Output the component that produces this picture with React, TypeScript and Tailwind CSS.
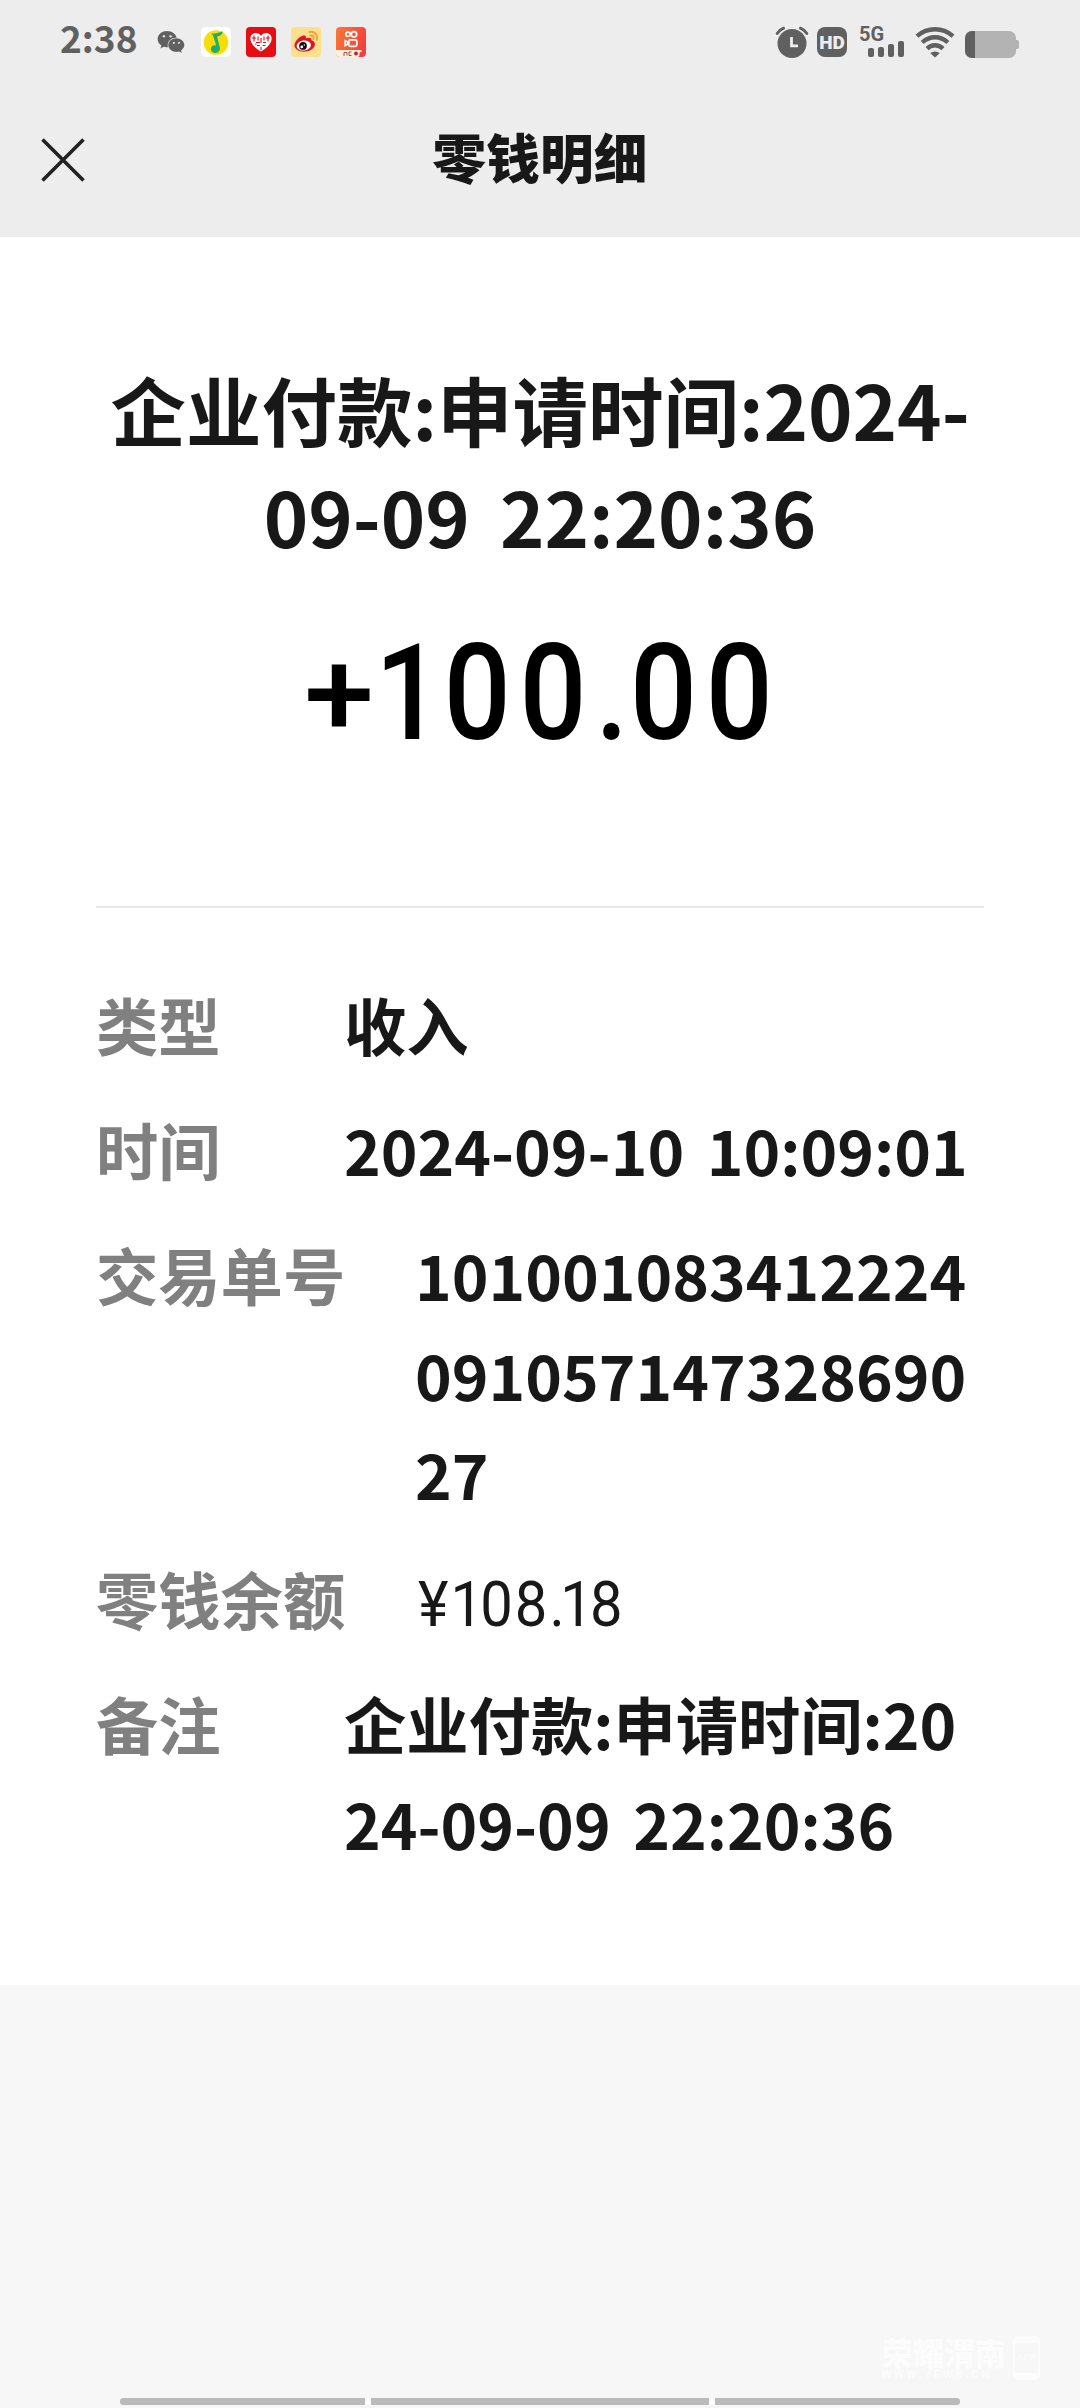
import type { ReactNode } from "react";
import { FaWeixin } from "react-icons/fa";

const cjk = "font-['Noto_Sans_CJK_SC',sans-serif]";

function MusicIcon() {
  return (
    <svg viewBox="0 0 30 30" className="size-[30px]">
      <rect width="30" height="30" rx="5" fill="#fff" />
      <circle cx="15" cy="15.5" r="12.3" fill="#fbdc05" />
      <path d="M10.5 6.5C14.5 6.6 18 5.8 21.5 4.2C22 6.8 19.8 8.7 16 9.4L18.9 20.6C19.4 23.7 17.4 26 14.5 26C11.7 26 9.8 24.3 9.8 22C9.8 19 12.6 17.6 15.2 18.4L12 8.4Z" fill="#1fae6d" />
    </svg>
  );
}

function HeartIcon() {
  return (
    <svg viewBox="0 0 30 30" className="size-[30px]">
      <rect width="30" height="30" rx="4" fill="#e60d14" />
      <path d="M15 24.5C10 21.5 4.4 17 4.4 11.7C4.4 8.2 6.8 6 9.8 6C12 6 14 7.2 15 9C16 7.2 18 6 20.2 6C23.2 6 25.6 8.2 25.6 11.7C25.6 17 20 21.5 15 24.5Z" fill="#fff" />
      <path d="M6 11h4M8 8.500v6M12 9.500v4M10 15.500h4M15 11v5M18 9.500v4M22 8.500v6M20 11h4M17 15.500h3M11 18.500h3M16.500 18.500h3M15 20v3M9 17l1.500 0" stroke="#e60d14" strokeWidth="1.100" fill="none" />
    </svg>
  );
}

function WeiboIcon() {
  return (
    <svg viewBox="0 0 30 30" className="size-[30px]">
      <rect width="30" height="30" rx="4" fill="#fde08e" />
      <path d="M12.500 8.500C14.500 8 15.400 9.300 14.800 11.300C17.500 10.200 20.700 10.200 20.500 13.200C23 14 24.500 15.800 23.800 18.600C22.700 22.400 17.800 24.900 12.500 24.700C7 24.500 3.200 21.700 3.500 17.800C3.800 14.200 8.700 9.200 12.500 8.500Z" fill="#e0161f" />
      <ellipse cx="12.800" cy="18.500" rx="7.200" ry="5" transform="rotate(-8 12.800 18.500)" fill="#fff" />
      <circle cx="12" cy="18.900" r="3.900" fill="#111" />
      <circle cx="10.800" cy="19.900" r="1.400" fill="#fff" />
      <circle cx="13.300" cy="18" r=".7" fill="#fff" />
      <path d="M18.500 5C23.500 3.800 27.200 8 25.700 12.700M19.300 8.500C21.700 8 23.300 9.800 22.600 12" stroke="#f4a13c" strokeWidth="2" fill="none" strokeLinecap="round" />
    </svg>
  );
}

function VideoIcon() {
  return (
    <svg viewBox="0 0 30 30" className="size-[30px]">
      <defs>
        <linearGradient id="video" x1="0" y1="0" x2="1" y2="0.400">
          <stop offset="0" stopColor="#fb7a37" />
          <stop offset="1" stopColor="#f5413c" />
        </linearGradient>
      </defs>
      <rect width="30" height="30" rx="4" fill="url(#video)" />
      <path d="M0 23H24C26 23 27 25 25 27L22 30H4Q0 30 0 26Z" fill="#fdf0dc" />
      <g fill="none" stroke="#fff" strokeWidth="1.700">
        <circle cx="12" cy="7.300" r="2.200" />
        <circle cx="18" cy="7.300" r="2.700" />
        <rect x="12.800" y="12.800" width="8" height="6.500" rx="1.500" />
        <path d="M9.200 13.800L12 15.300V17L9.200 18.500Z" />
      </g>
      <path d="M8 25.500h3v3M8 25.500v3.500M13 25h2.500M13 28.500h2.500M13 25v3.500" stroke="#a05048" strokeWidth="1" fill="none" />
      <circle cx="20" cy="26.500" r="1.900" fill="#c01f35" />
      <circle cx="26" cy="27" r="2.600" fill="#f23c4c" />
    </svg>
  );
}

function AlarmIcon() {
  return (
    <svg viewBox="0 0 34 32" className="h-8 w-[34px]">
      <circle cx="17" cy="17.500" r="14.500" fill="#606060" />
      <path d="M2.200 7.500Q4.500 3.800 8.600 2.200M25.400 2.200Q29.500 3.800 31.800 7.500" stroke="#606060" strokeWidth="2.900" fill="none" strokeLinecap="round" />
      <path d="M16.500 11V19.800H23" stroke="#ededed" strokeWidth="2.800" fill="none" />
    </svg>
  );
}

function WifiIcon() {
  return (
    <svg viewBox="0 0 40 32" className="h-8 w-10">
      <g fill="none" stroke="#606060" strokeWidth="4.400">
        <path d="M2 10.200Q10 3.300 20 3.300T38 10.200" />
        <path d="M7.200 16.500Q12.800 11.300 20 11.300T32.800 16.500" />
        <path d="M12 22.600Q15.500 19.300 20 19.300T28 22.600" />
      </g>
      <path d="M15.200 27Q20 23.800 24.800 27L20 31.500Z" fill="#606060" />
    </svg>
  );
}

function Row({ label, wide, children }: { label: string; wide?: boolean; children: ReactNode }) {
  return (
    <div className="flex items-baseline">
      <div className={`${wide ? "w-[319px]" : "w-[248px]"} shrink-0 text-[#808080]`}>{label}</div>
      <div className="whitespace-nowrap text-[#181818]">{children}</div>
    </div>
  );
}

export default function App() {
  return (
    <div className={`${cjk} flex h-[2408px] w-[1080px] flex-col overflow-hidden bg-[#f7f7f7] font-bold`}>
      <header className="h-[237px] shrink-0 bg-[#ededed]">
        <div className="flex h-[84px] items-start justify-between">
          <div className="flex pt-[27px] pl-[60px]">
            <span className="-mt-[11px] w-[97px] text-[37px] leading-[42px] font-bold text-[#606060]">2:38</span>
            <FaWeixin className="mt-px mr-[16px] size-[28px] text-[#606060]" />
            <div className="flex gap-[15px]">
              <MusicIcon />
              <HeartIcon />
              <WeiboIcon />
              <VideoIcon />
            </div>
          </div>
          <div className="flex pt-[26px] pr-[61px]">
            <AlarmIcon />
            <div className="mt-px ml-[8px] flex h-[30px] w-[30px] items-center justify-center rounded-[8px] bg-[#606060] font-['Roboto',sans-serif] text-[19px] leading-none font-black text-[#ededed]">
              HD
            </div>
            <div className="relative ml-[12px] flex h-[31px] w-[45px] items-end justify-end gap-[4px]">
              <span className="absolute top-0 left-0 font-['Roboto',sans-serif] text-[20px] leading-[17px] font-bold text-[#606060]">5G</span>
              <span className="h-[9px] w-[6px] rounded-[2px] bg-[#606060]" />
              <span className="h-[10px] w-[6px] rounded-[2px] bg-[#606060]" />
              <span className="h-[13px] w-[6px] rounded-[2px] bg-[#606060]" />
              <span className="h-[16px] w-[6px] rounded-[2px] bg-[#606060]" />
            </div>
            <div className="ml-[11px]">
              <WifiIcon />
            </div>
            <div className="mt-[4px] ml-[10px] flex items-center">
              <div className="h-[27px] w-[51px] overflow-hidden rounded-[7px] bg-[#b3b3b3]">
                <div className="h-full w-[10px] bg-[#606060]" />
              </div>
              <div className="h-[9px] w-[3px] rounded-r-[2px] bg-[#b3b3b3]" />
            </div>
          </div>
        </div>
        <div className="grid h-[150px] grid-cols-[1fr_auto_1fr] items-start">
          <svg viewBox="0 0 44 44" className="mt-[54px] ml-[41px] size-[44px]">
            <path d="M1.500 1.500L42.500 42.500M42.500 1.500L1.500 42.500" stroke="#222" strokeWidth="3.600" />
          </svg>
          <h1 className="mt-[32px] text-[53.700px] leading-[80px] font-black text-[#181818]">零钱明细</h1>
        </div>
      </header>

      <main className="h-[1748px] shrink-0 bg-white px-[96px] pt-[118px]">
        <div className="text-center text-[75.500px] leading-[107px] whitespace-nowrap text-[#181818] [word-spacing:13px]">
          企业付款:申请时间:2024-
          <br />
          09-09 22:20:36
        </div>
        <div className="mt-[45px] flex h-[160px] origin-center scale-x-[0.88] items-baseline justify-center pl-[7px] font-['Roboto',sans-serif] text-[134px] leading-[160px] font-medium tracking-[10px] whitespace-nowrap text-black">
          <span className="mr-[14px] origin-left -translate-y-[4px] scale-x-[1.2] text-[119px] tracking-normal">+</span>
          <span className="tracking-[2px]">1</span>
          <span>00</span>
          <span className="tracking-[2px]">.</span>
          <span>00</span>
        </div>
        <div className="mt-[132px] h-[2px] bg-[#e8e8e8]" />
        <div className="flex flex-col gap-[25.300px] pt-[67px] text-[62.300px] leading-[99.700px] [word-spacing:8.500px]">
          <Row label="类型">收入</Row>
          <Row label="时间">2024-09-10 10:09:01</Row>
          <Row label="交易单号" wide>
            101001083412224
            <br />
            091057147328690
            <br />
            27
          </Row>
          <div className="h-[99.700px]">
            <Row label="零钱余额" wide>
              <span className="ml-[3px] inline-flex origin-left translate-y-px scale-x-[0.93] font-['Roboto',sans-serif] font-normal tracking-[2.200px]">
                <span>¥</span>
                <span className="tracking-[-3px]">1</span>
                <span>08</span>
                <span className="tracking-[-5px]">.</span>
                <span className="tracking-[-3px]">1</span>
                <span>8</span>
              </span>
            </Row>
          </div>
          <Row label="备注">
            企业付款:申请时间:20
            <br />
            24-09-09 22:20:36
          </Row>
        </div>
      </main>

      <footer className="flex flex-1 flex-col justify-end">
        <div className="mr-[40px] mb-[17px] flex items-center justify-end gap-[4px] text-[#fcfcfc]">
          <div className="flex w-[127px] flex-col">
            <span className="text-[31px] leading-[34px] font-black">荣耀渭南</span>
            <span className="font-['Liberation_Sans',sans-serif] text-[10px] leading-[12px] tracking-[2.900px]">WWW.YEWN.CN</span>
          </div>
          <div className="flex h-[44px] w-[27px] items-center justify-center rounded-[5px] border-2 border-y-[7px] border-[#fcfcfc] font-['Liberation_Sans',sans-serif] text-[9px] font-normal">
            APP
          </div>
        </div>
        <div className="mx-[120px] mb-[3px] flex h-[7px] gap-[6px] bg-white">
          <div className="w-[245px] rounded-l-[3px] bg-[#bababa]" />
          <div className="w-[338px] bg-[#bababa]" />
          <div className="w-[245px] rounded-r-[3px] bg-[#bababa]" />
        </div>
      </footer>
    </div>
  );
}
